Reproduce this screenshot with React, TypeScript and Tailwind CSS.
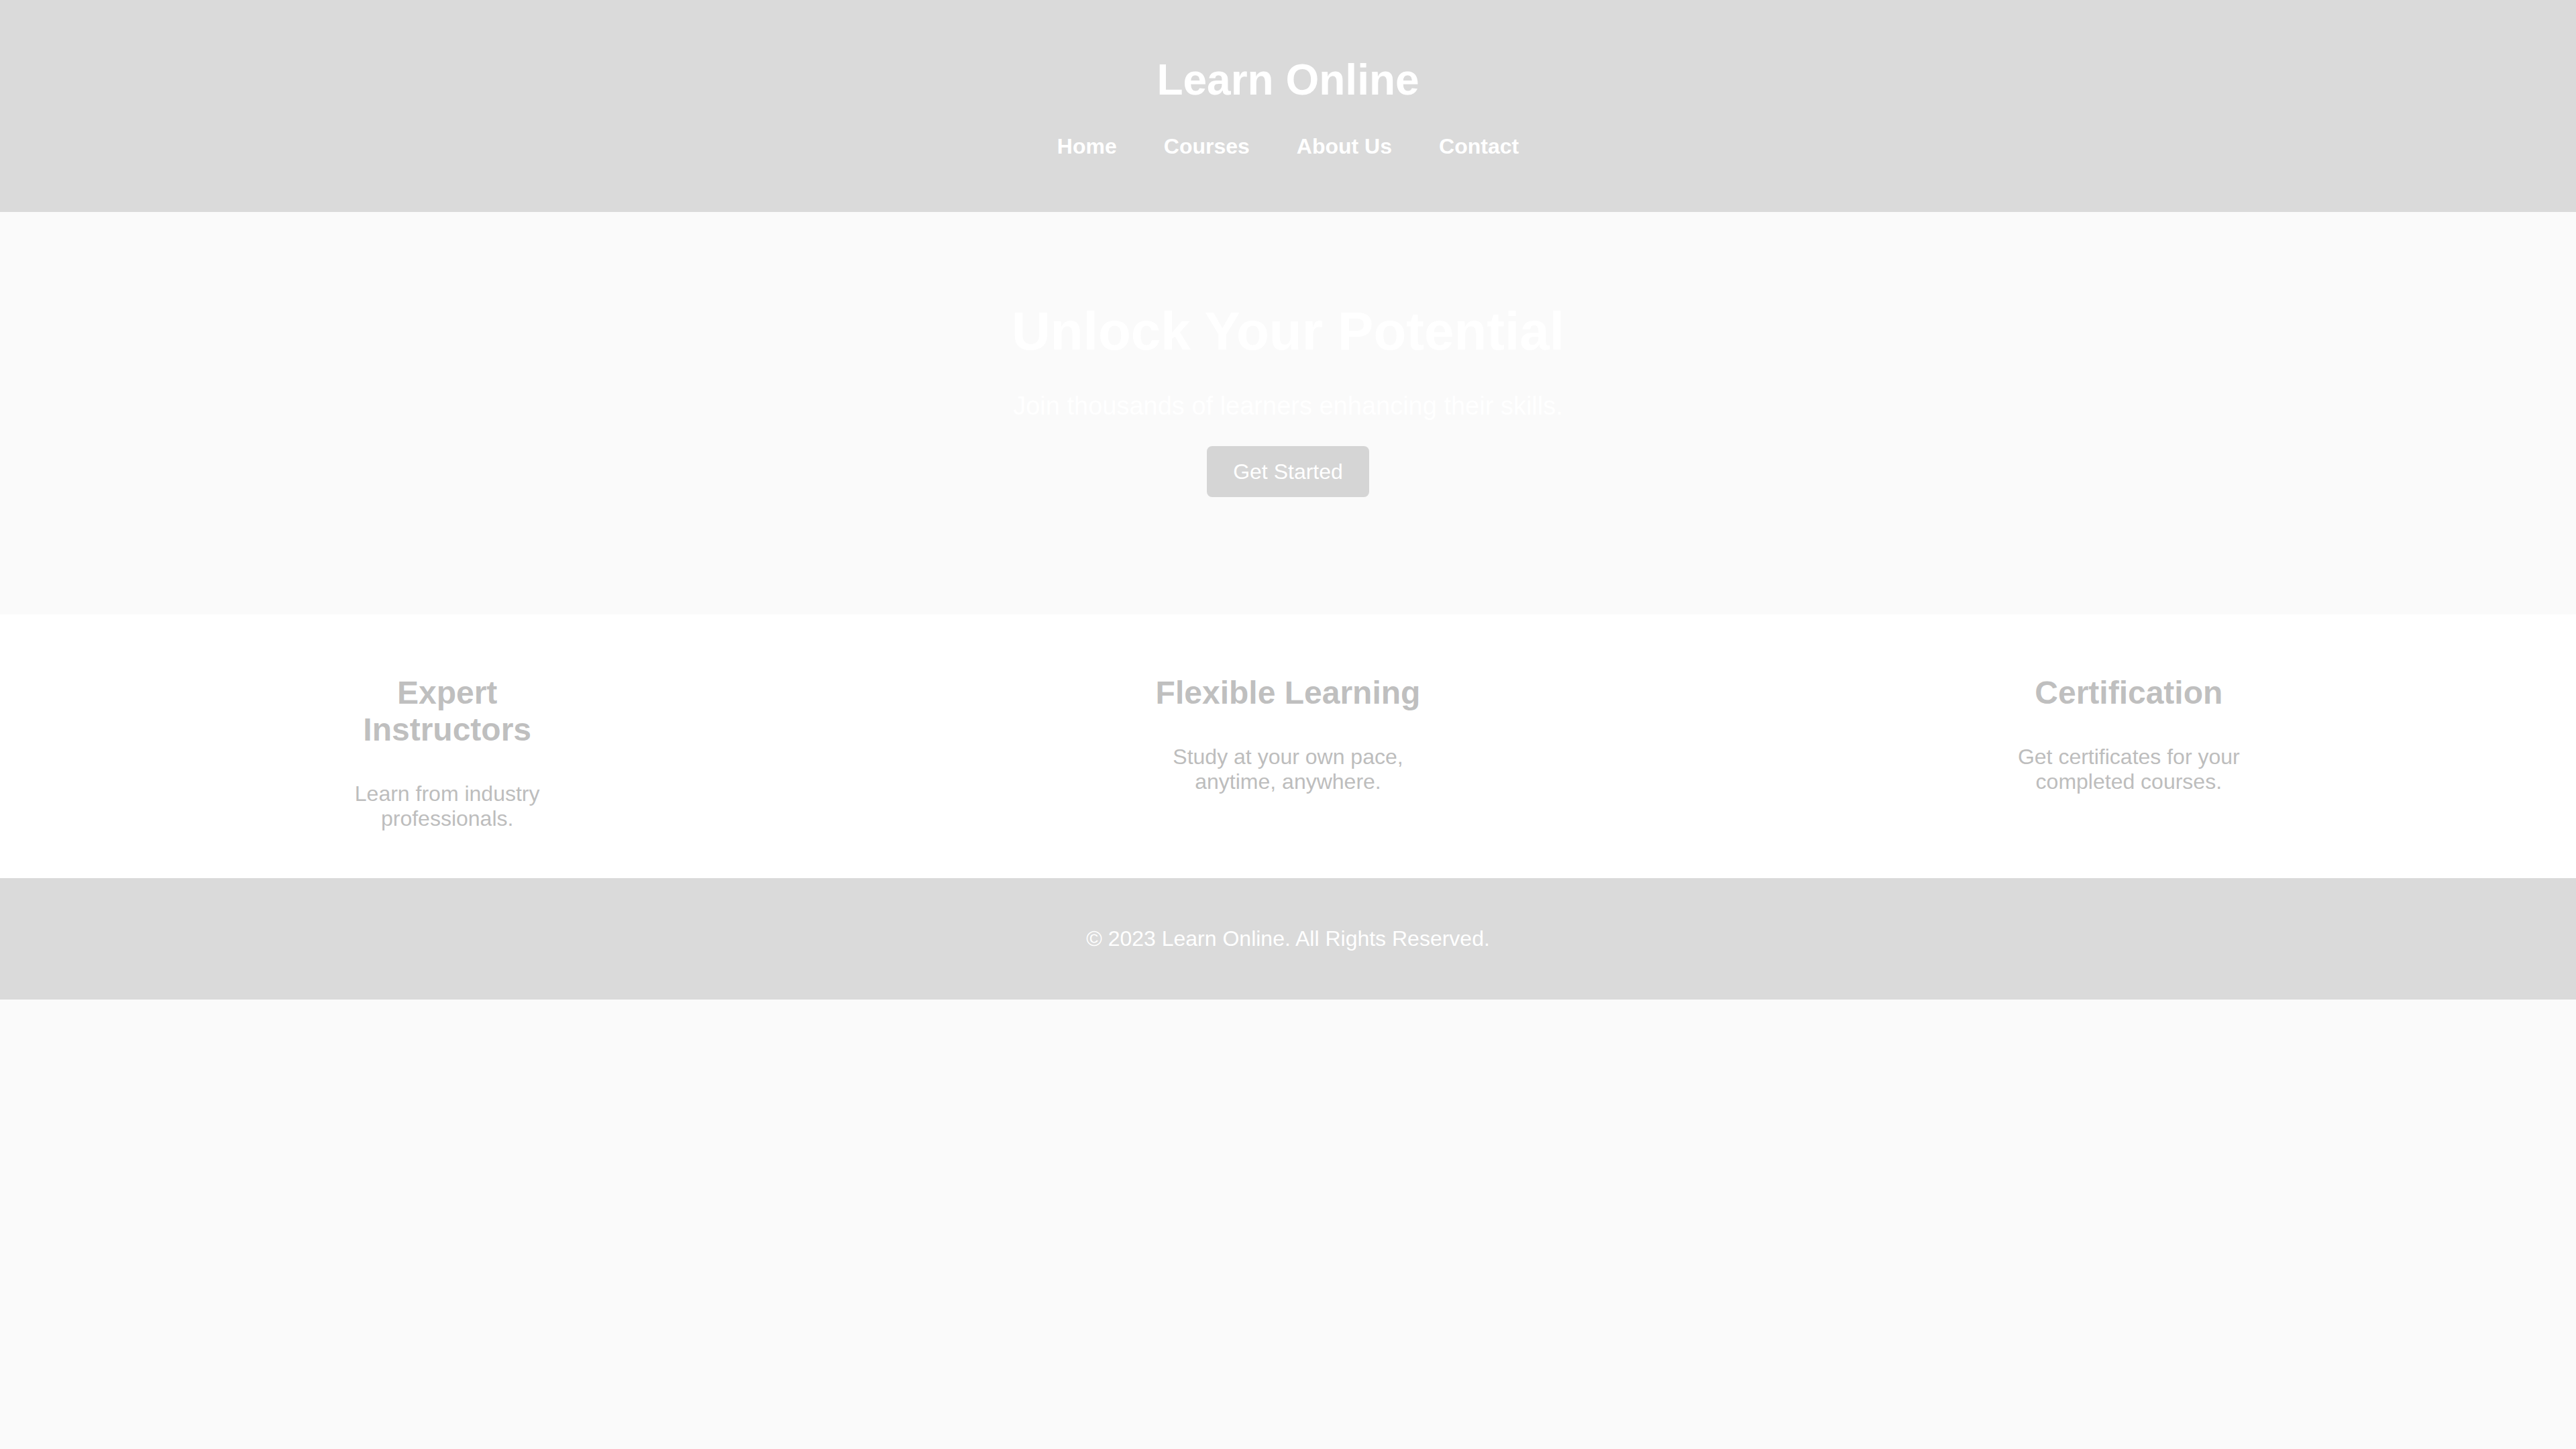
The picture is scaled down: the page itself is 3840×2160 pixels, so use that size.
// Landing page for the "Learn Online" course site.
// Header with title + nav, hero banner, three feature columns and a footer.

const navLinks = ['Home', 'Courses', 'About Us', 'Contact'];

const features = [
  { title: 'Expert Instructors', text: 'Learn from industry professionals.' },
  { title: 'Flexible Learning', text: 'Study at your own pace, anytime, anywhere.' },
  { title: 'Certification', text: 'Get certificates for your completed courses.' },
];

function Header() {
  return (
    <header className="bg-[#dadada] pt-[83px] pb-[80px] flex flex-col items-center text-white">
      <h1 className="text-[64px] font-bold leading-[1.15]">Learn Online</h1>
      {/* Nav links - plain bold text, no underline */}
      <nav className="mt-[43px]">
        <ul className="flex gap-[70px]">
          {navLinks.map((label) => (
            <li key={label}>
              <a href="#" className="text-[32px] font-bold leading-[1.15]">
                {label}
              </a>
            </li>
          ))}
        </ul>
      </nav>
    </header>
  );
}

function Hero() {
  return (
    <section className="bg-[#fafafa] pt-[132px] pb-[175px] flex flex-col items-center text-white text-center">
      <h2 className="text-[80px] font-bold leading-[1.15]">Unlock Your Potential</h2>
      <p className="mt-[44px] text-[38px] leading-[1.15]">Join thousands of learners enhancing their skills.</p>
      <button className="mt-[37px] h-[76px] w-[242px] rounded-[8px] bg-[#d5d5d5] text-[32px] leading-[1.15] text-white">
        Get Started
      </button>
    </section>
  );
}

function Features() {
  return (
    <section className="bg-white px-10 pt-[89px] pb-[70px] flex justify-around items-start">
      {features.map((f) => (
        <div key={f.title} className="w-[400px] text-center">
          <h3 className="text-[48px] font-bold leading-[1.15] text-[#bfbfbf]">{f.title}</h3>
          <p className="mt-[50px] text-[32px] leading-[1.15] text-[#bdbdbd]">{f.text}</p>
        </div>
      ))}
    </section>
  );
}

function Footer() {
  return (
    <footer className="bg-[#dadada] h-[181px] flex items-center justify-center">
      <p className="text-[32px] leading-[1.15] text-white">© 2023 Learn Online. All Rights Reserved.</p>
    </footer>
  );
}

export default function App() {
  return (
    <div className="min-h-screen bg-[#fafafa] font-['Liberation_Sans',Arial,sans-serif]">
      <Header />
      <Hero />
      <Features />
      <Footer />
    </div>
  );
}
